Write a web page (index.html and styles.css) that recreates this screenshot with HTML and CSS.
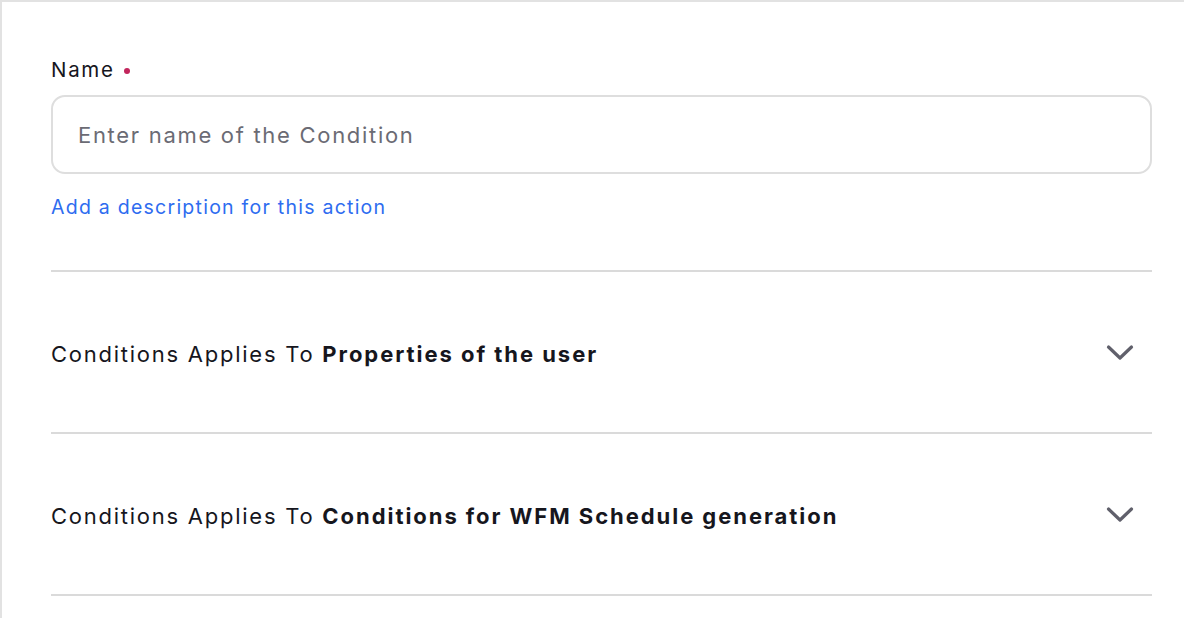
FILE: index.html
```html
<!DOCTYPE html>
<html>
<head>
<meta charset="utf-8">
<link rel="stylesheet" href="styles.css">
</head>
<body>
<div class="frame">
  <div class="field">
    <label class="label">Name <span class="req"></span></label>
    <div class="input">Enter name of the Condition</div>
    <a class="link">Add a description for this action</a>
  </div>
  <div class="row">
    <div class="row-text">Conditions Applies To <b>Properties of the user</b></div>
    <svg class="chev" width="28" height="18" viewBox="0 0 28 18"><path d="M2.5 3 L14 14 L25.5 3" fill="none" stroke="#60606b" stroke-width="3.2" stroke-linecap="round" stroke-linejoin="round"/></svg>
  </div>
  <div class="row">
    <div class="row-text">Conditions Applies To <b>Conditions for WFM Schedule generation</b></div>
    <svg class="chev" width="28" height="18" viewBox="0 0 28 18"><path d="M2.5 3 L14 14 L25.5 3" fill="none" stroke="#60606b" stroke-width="3.2" stroke-linecap="round" stroke-linejoin="round"/></svg>
  </div>
</div>
</body>
</html>
```
FILE: styles.css
```css
html, body {
  margin: 0;
  padding: 0;
  background: #fff;
}
body {
  font-family: Inter, "Noto Sans", sans-serif;
  color: #16161d;
}
.frame {
  border-top: 2px solid #e2e2e2;
  border-left: 2px solid #e2e2e2;
  height: 618px;
  box-sizing: border-box;
  padding: 0 32px 0 49px;
  overflow: hidden;
}
.field {
  padding-top: 55px;
  padding-bottom: 50px;
  border-bottom: 2px solid #dadada;
}
.label {
  display: flex;
  align-items: center;
  gap: 9px;
  font-size: 20.5px;
  letter-spacing: 1.7px;
  line-height: 26px;
  height: 26px;
}
.req {
  width: 6px;
  height: 6px;
  border-radius: 50%;
  background: #c2255c;
  margin-top: 2px;
}
.input {
  margin-top: 12px;
  height: 79px;
  box-sizing: border-box;
  border: 2px solid #dedede;
  border-radius: 14px;
  padding-left: 25px;
  display: flex;
  align-items: center;
  font-size: 22px;
  letter-spacing: 1.7px;
  color: #6b6b74;
}
.link {
  display: block;
  margin-top: 20px;
  font-size: 19.5px;
  letter-spacing: 1.25px;
  line-height: 26px;
  color: #2e6cf0;
}
.row {
  height: 162px;
  box-sizing: border-box;
  border-bottom: 2px solid #dadada;
  display: flex;
  align-items: center;
  justify-content: space-between;
  padding-right: 18px;
  padding-top: 3px;
}
.row-text {
  font-size: 22px;
  letter-spacing: 1.75px;
  color: #16161d;
}
.row-text b {
  font-weight: 700;
  letter-spacing: 1.95px;
}
.chev {
  display: block;
  margin-top: -1px;
}
```
